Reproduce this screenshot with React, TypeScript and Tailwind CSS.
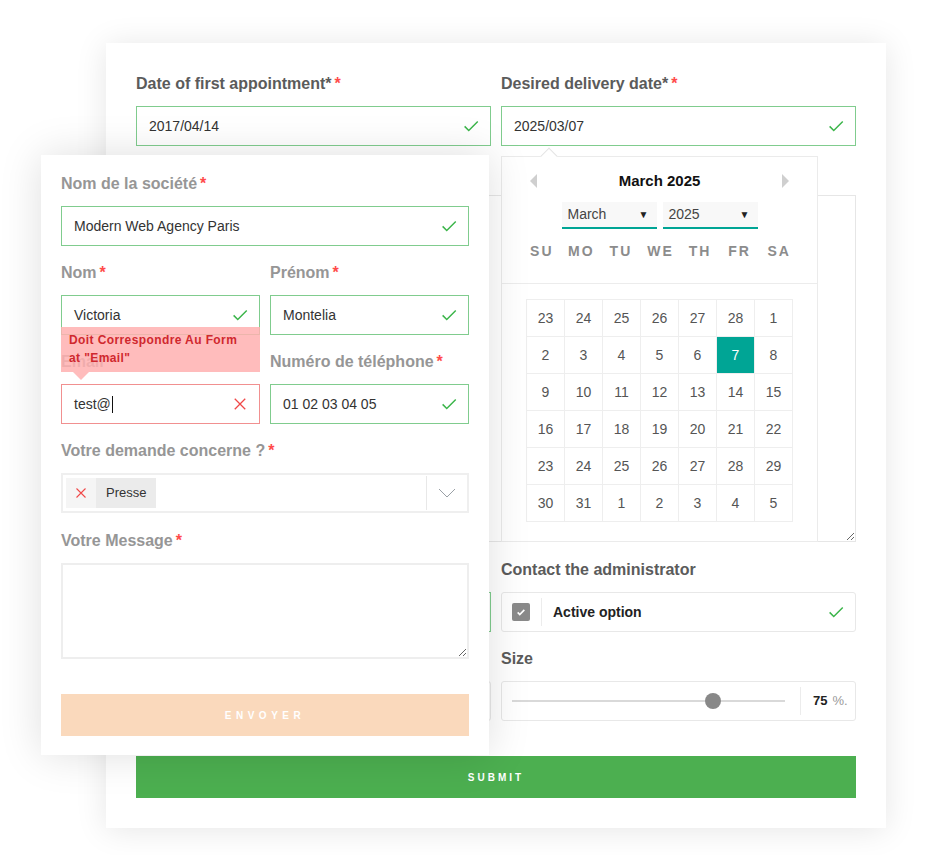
import { ReactNode } from "react"

const font = { fontFamily: '"Liberation Sans", Arial, sans-serif' }

const Check = ({ className = "" }: { className?: string }) => (
  <svg viewBox="0 0 24 24" className={`h-[18px] w-[18px] ${className}`} fill="none" stroke="#3bb54a" strokeWidth="2">
    <path d="M3.5 12.5l5.5 5.5L21 6" />
  </svg>
)

const Cross = ({ className = "" }: { className?: string }) => (
  <svg viewBox="0 0 16 16" className={className} fill="none" stroke="#f04848" strokeWidth="1.5">
    <path d="M2 2l12 12M14 2L2 14" />
  </svg>
)

const BackLabel = ({ children }: { children: ReactNode }) => (
  <div className="flex h-[21px] items-center pt-[2px] text-[16px] font-bold text-[#5b5b5b]">{children}</div>
)

const FrontLabel = ({ children, star = true }: { children: ReactNode; star?: boolean }) => (
  <div className="flex h-[21px] items-center pt-[2px] text-[16px] font-bold text-[#969696]">
    {children}
    {star && <span className="ml-[3px] text-[#ff4b4b]">*</span>}
  </div>
)

const Field = ({ value, invalid = false }: { value: ReactNode; invalid?: boolean }) => (
  <div
    className={`flex h-10 items-center justify-between border bg-white pl-3 pr-[10px] text-[14px] text-[#333] ${
      invalid ? "border-[#f19090]" : "border-[#80cc8e]"
    }`}
  >
    <span className="flex items-center">{value}</span>
    {invalid ? <Cross className="h-[14px] w-[14px] mr-[2px]" /> : <Check />}
  </div>
)

const days = [
  [23, 24, 25, 26, 27, 28, 1],
  [2, 3, 4, 5, 6, 7, 8],
  [9, 10, 11, 12, 13, 14, 15],
  [16, 17, 18, 19, 20, 21, 22],
  [23, 24, 25, 26, 27, 28, 29],
  [30, 31, 1, 2, 3, 4, 5],
]

const Calendar = () => (
  <div className="absolute left-[395px] top-[113px] z-10 h-[386px] w-[317px] border border-[#ebebeb] bg-white">
    {/* caret */}
    <div className="absolute left-[41px] top-[-7px] h-[12px] w-[12px] rotate-45 border-l border-t border-[#e4e4e4] bg-white" />
    <div className="flex h-5 items-center justify-between px-[28px] mt-[14px]">
      <span className="h-0 w-0 border-y-[7px] border-r-[7px] border-y-transparent border-r-[#cfcfcf]" />
      <span className="text-[15px] font-bold text-[#111]">March 2025</span>
      <span className="h-0 w-0 border-y-[7px] border-l-[7px] border-y-transparent border-l-[#cfcfcf]" />
    </div>
    <div className="mt-[11px] flex justify-center gap-[6px]">
      {["March", "2025"].map((v) => (
        <div
          key={v}
          className="flex h-[27px] w-[95px] items-center justify-between border-b-2 border-[#00a595] bg-[#f8f8f8] pl-[6px] pr-[8px] text-[14px] text-[#444]"
        >
          <span>{v}</span>
          <span className="text-[10px] text-[#222]">▼</span>
        </div>
      ))}
    </div>
    <div className="mt-[12px] grid h-5 grid-cols-7 items-center px-[19px] text-[14px] font-bold tracking-[2px] text-[#8c8c8c]">
      {["SU", "MO", "TU", "WE", "TH", "FR", "SA"].map((d) => (
        <span key={d} className="text-center pl-[2px]">{d}</span>
      ))}
    </div>
    <div className="mt-[22px] border-t border-[#ececec]" />
    <div className="ml-[24px] mt-[15px] grid w-fit grid-cols-[repeat(7,38px)] border-l border-t border-[#eeeeee]">
      {days.flat().map((d, i) => (
        <div
          key={i}
          className={`flex h-[37px] items-center justify-center border-b border-r border-[#eeeeee] text-[14px] ${
            i === 12 ? "bg-[#00a595] text-white" : "text-[#555]"
          }`}
        >
          {d}
        </div>
      ))}
    </div>
  </div>
)

const FrontCard = () => (
  <div className="absolute left-[41px] top-[155px] z-20 w-[448px] bg-white px-5 pt-[17px] pb-[19px] shadow-[0_0_40px_rgba(0,0,0,0.13)]">
    <FrontLabel>Nom de la société</FrontLabel>
    <div className="mt-[13px]">
      <Field value="Modern Web Agency Paris" />
    </div>
    <div className="mt-[15px] grid grid-cols-2 gap-x-[10px]">
      <FrontLabel>Nom</FrontLabel>
      <FrontLabel>Prénom</FrontLabel>
      <div className="relative mt-[13px]">
        <Field value="Victoria" />
        <div className="absolute left-0 right-0 top-[32px] z-10 h-[45px] bg-[rgba(255,176,176,0.85)] px-2 pt-[4px] text-[12px] font-bold leading-[18px] tracking-[0.4px] text-[#d0282e]">
          Doit Correspondre Au Form
          <br />
          at "Email"
          <span className="absolute left-[12px] top-[45px] h-0 w-0 border-x-[8px] border-t-[8px] border-x-transparent border-t-[rgba(255,176,176,0.85)]" />
        </div>
      </div>
      <div className="mt-[13px]">
        <Field value="Montelia" />
      </div>
      <div className="mt-[15px]">
        <FrontLabel>Email</FrontLabel>
      </div>
      <div className="mt-[15px]">
        <FrontLabel>Numéro de téléphone</FrontLabel>
      </div>
      <div className="mt-[13px]">
        <Field
          invalid
          value={
            <>
              test@<span className="ml-[1px] inline-block h-[17px] w-px bg-[#111]" />
            </>
          }
        />
      </div>
      <div className="mt-[13px]">
        <Field value="01 02 03 04 05" />
      </div>
    </div>
    <div className="mt-[15px]">
      <FrontLabel>Votre demande concerne ?</FrontLabel>
    </div>
    <div className="mt-[13px] flex h-10 items-center border-2 border-[#efefef] bg-white pl-[3px]">
      <div className="flex h-[30px] items-center">
        <span className="flex h-full w-[30px] items-center justify-center bg-[#f5f5f5]">
          <Cross className="h-[12px] w-[12px]" />
        </span>
        <span className="flex h-full items-center bg-[#ebebeb] px-[10px] text-[13px] text-[#333]">Presse</span>
      </div>
      <div className="ml-auto flex h-[34px] w-[41px] items-center justify-center border-l border-[#e8e8e8]">
        <svg viewBox="0 0 18 10" className="h-[10px] w-[18px]" fill="none" stroke="#9aa0a6" strokeWidth="1">
          <path d="M1 1l8 8 8-8" />
        </svg>
      </div>
    </div>
    <div className="mt-4">
      <FrontLabel>Votre Message</FrontLabel>
    </div>
    <textarea
      readOnly
      className="mt-[13px] block h-[96px] w-full border-2 border-[#eeeeee] bg-white outline-none"
    />
    <button className="mt-[35px] flex h-[42px] w-full items-center justify-center bg-[#fad9bc] text-[10px] font-bold tracking-[4.5px] text-white">
      ENVOYER
    </button>
  </div>
)

export default function App() {
  return (
    <div className="relative min-h-screen bg-white pl-[106px] pt-[43px]" style={font}>
      <div className="relative w-[780px] bg-white px-[30px] pt-[29px] pb-[30px] shadow-[0_2px_30px_rgba(0,0,0,0.1)]">
        <div className="grid grid-cols-2 gap-x-[10px]">
          <BackLabel>
            Date of first appointment*<span className="ml-[3px] text-[#ff4b4b]">*</span>
          </BackLabel>
          <BackLabel>
            Desired delivery date*<span className="ml-[3px] text-[#ff4b4b]">*</span>
          </BackLabel>
          <div className="mt-[13px]">
            <Field value="2017/04/14" />
          </div>
          <div className="mt-[13px]">
            <Field value="2025/03/07" />
          </div>
        </div>
        <textarea readOnly className="mt-[49px] block h-[347px] w-full border border-[#e6e6e6] bg-white outline-none" />
        <div className="mt-[16px] grid grid-cols-2 gap-x-[10px]">
          <BackLabel>Your company</BackLabel>
          <BackLabel>Contact the administrator</BackLabel>
          <div className="mt-[13px]">
            <Field value="Company" />
          </div>
          <div className="mt-[13px] flex h-10 items-center rounded-[3px] border border-[#e8e8e8] pl-[10px] pr-[10px]">
            <span className="flex h-[18px] w-[18px] items-center justify-center rounded-[2px] bg-[#8a8a8a]">
              <svg viewBox="0 0 12 12" className="h-[10px] w-[10px]" fill="none" stroke="white" strokeWidth="2">
                <path d="M2 6.5l2.5 2.5L10 3.5" />
              </svg>
            </span>
            <span className="ml-[11px] h-7 w-px bg-[#ececec]" />
            <span className="ml-[11px] text-[14px] font-bold text-[#222]">Active option</span>
            <Check className="ml-auto" />
          </div>
          <div className="mt-[15px]">
            <BackLabel>Budget</BackLabel>
          </div>
          <div className="mt-[15px]">
            <BackLabel>Size</BackLabel>
          </div>
          <div className="mt-[13px] h-10 rounded-[3px] border border-[#e8e8e8]" />
          <div className="mt-[13px] flex h-10 items-center rounded-[3px] border border-[#e8e8e8] pl-[10px]">
            <span className="h-[2px] w-[193px] bg-[#d9d9d9]" />
            <span className="h-4 w-4 rounded-full bg-[#888]" />
            <span className="h-[2px] w-[64px] bg-[#d9d9d9]" />
            <span className="ml-[15px] h-7 w-px bg-[#ececec]" />
            <span className="ml-[12px] text-[13px] font-bold text-[#222]">75</span>
            <span className="ml-[5px] text-[13px] text-[#999]">%.</span>
          </div>
        </div>
        <button className="mt-[35px] flex h-[42px] w-full items-center justify-center bg-[#4caf50] text-[10px] font-bold tracking-[3px] text-white">
          SUBMIT
        </button>
        <Calendar />
      </div>
      <FrontCard />
    </div>
  )
}
